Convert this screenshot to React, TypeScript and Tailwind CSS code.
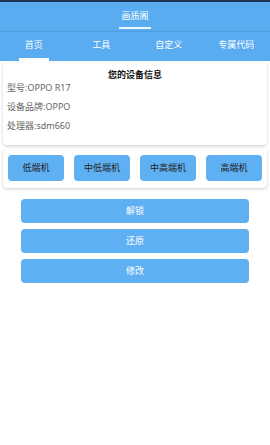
import React from 'react'

const tabs = ['首页', '工具', '自定义', '专属代码']
const levels = ['低端机', '中低端机', '中高端机', '高端机']
const actions = ['解锁', '还原', '修改']

export default function App() {
  return (
    <div
      className="w-[270px] h-[445px] bg-white overflow-hidden"
      style={{ fontFamily: '"Noto Sans", "Noto Sans CJK SC", sans-serif' }}
    >
      <div className="h-[2px] bg-[#1d3557]" />
      {/* Title bar */}
      <div className="bg-[#5aacf1] h-[29px] flex justify-center">
        <div className="flex flex-col items-center justify-end w-[32px]">
          <span className="text-[9px] leading-none text-white mb-[7px]">画质阁</span>
          <div className="h-[2px] w-full bg-white/90 mb-[2px]" />
        </div>
      </div>
      <div className="h-px bg-[#4d9ddf]" />
      {/* Tabs */}
      <div className="bg-[#5aacf1] h-[29px] grid grid-cols-4">
        {tabs.map((t, i) => (
          <div key={t} className="flex flex-col items-center justify-between">
            <div className="flex-1 flex items-center text-[9px] text-white">{t}</div>
            <div className={`h-[3px] w-[30px] ${i === 0 ? 'bg-white' : 'bg-transparent'}`} />
          </div>
        ))}
      </div>

      {/* Device info card */}
      <div className="mx-[3px] mt-[2px] rounded-sm bg-white shadow-[0_1px_3px_rgba(0,0,0,0.2)] pt-[7px] pb-[14px] px-[4px]">
        <div className="text-center text-[9px] font-bold text-[#111] leading-none mb-[3px]">您的设备信息</div>
        <div className="flex flex-col gap-[8px] text-[9px] text-[#666] leading-[11px]">
          <div>型号:OPPO R17</div>
          <div>设备品牌:OPPO</div>
          <div>处理器:sdm660</div>
        </div>
      </div>

      {/* Level card */}
      <div className="mx-[3px] mt-[3px] rounded-sm bg-white shadow-[0_1px_3px_rgba(0,0,0,0.2)] px-[5px] py-[7px] grid grid-cols-4 gap-[10px]">
        {levels.map(l => (
          <div key={l} className="h-[26px] rounded-[4px] bg-[#5fb0f3] flex items-center justify-center text-[9px] text-[#222]">
            {l}
          </div>
        ))}
      </div>

      {/* Actions */}
      <div className="mt-[11px] px-[21px] flex flex-col gap-[6px]">
        {actions.map(a => (
          <div key={a} className="h-[24px] rounded-[4px] bg-[#5fb0f3] flex items-center justify-center text-[9px] text-white">
            {a}
          </div>
        ))}
      </div>
    </div>
  )
}
